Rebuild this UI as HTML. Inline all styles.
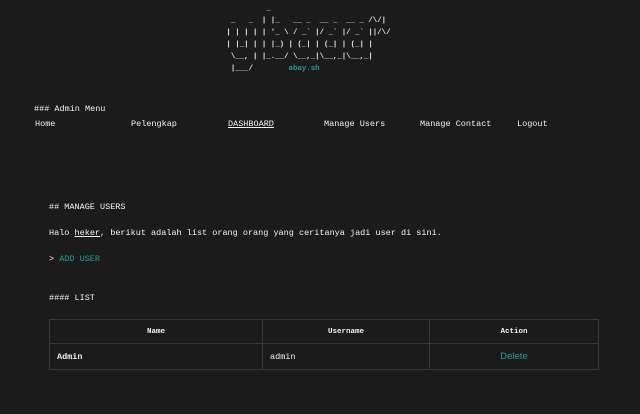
<!DOCTYPE html>
<html><head><style>
html,body{margin:0;background:#1b1b1b;width:640px;height:414px;overflow:hidden;}
body{font-family:"Liberation Mono",monospace;font-size:8.5px;color:#f2f2f2;position:relative;}
.a{position:absolute;white-space:pre;}
pre{margin:0;position:absolute;left:222px;top:3px;font-family:"Liberation Mono",monospace;font-size:7.4px;line-height:12px;color:#e6e6e6;font-weight:bold;}
.t{color:#1fa191;}
.nav span{position:absolute;top:119px;}
u{text-decoration:underline;}
table{position:absolute;left:49px;top:319px;width:550px;border-collapse:collapse;}
td,th{border:1px solid #383838;font-size:7.5px;padding:0;}
th{height:23px;font-weight:bold;}
td{height:25px;}
</style></head><body>
<pre>          _
  _   _  | |_   __ _  __ _  __ _ /\/|
 | | | | | '_ \ / _` |/ _` |/ _` ||/\/
 | |_| | | |_) | (_| | (_| | (_| |
  \__, | |_.__/ \__,_|\__,_|\__,_|
  |___/     <span class="t">   abay.sh</span></pre>
<div class="a" style="left:34px;top:104px">### Admin Menu</div>
<div class="nav">
<span style="left:35px">Home</span>
<span style="left:131px">Pelengkap</span>
<span style="left:228px"><u>DASHBOARD</u></span>
<span style="left:324px">Manage Users</span>
<span style="left:420px">Manage Contact</span>
<span style="left:517px">Logout</span>
</div>
<div class="a" style="left:49px;top:202px">## MANAGE USERS</div>
<div class="a" style="left:49px;top:228px">Halo <u>heker</u>, berikut adalah list orang orang yang ceritanya jadi user di sini.</div>
<div class="a" style="left:49px;top:254px">&gt; <span class="t">ADD USER</span></div>
<div class="a" style="left:49px;top:293px">#### LIST</div>
<table>
<tr><th style="width:212px">Name</th><th style="width:166px">Username</th><th>Action</th></tr>
<tr><td style="padding-left:7px;font-weight:bold;font-size:8.5px">Admin</td><td style="padding-left:7px;font-size:8.5px">admin</td><td style="text-align:center;font-family:'Liberation Sans',sans-serif;font-size:9.5px;color:#1fa191">Delete</td></tr>
</table>
</body></html>
